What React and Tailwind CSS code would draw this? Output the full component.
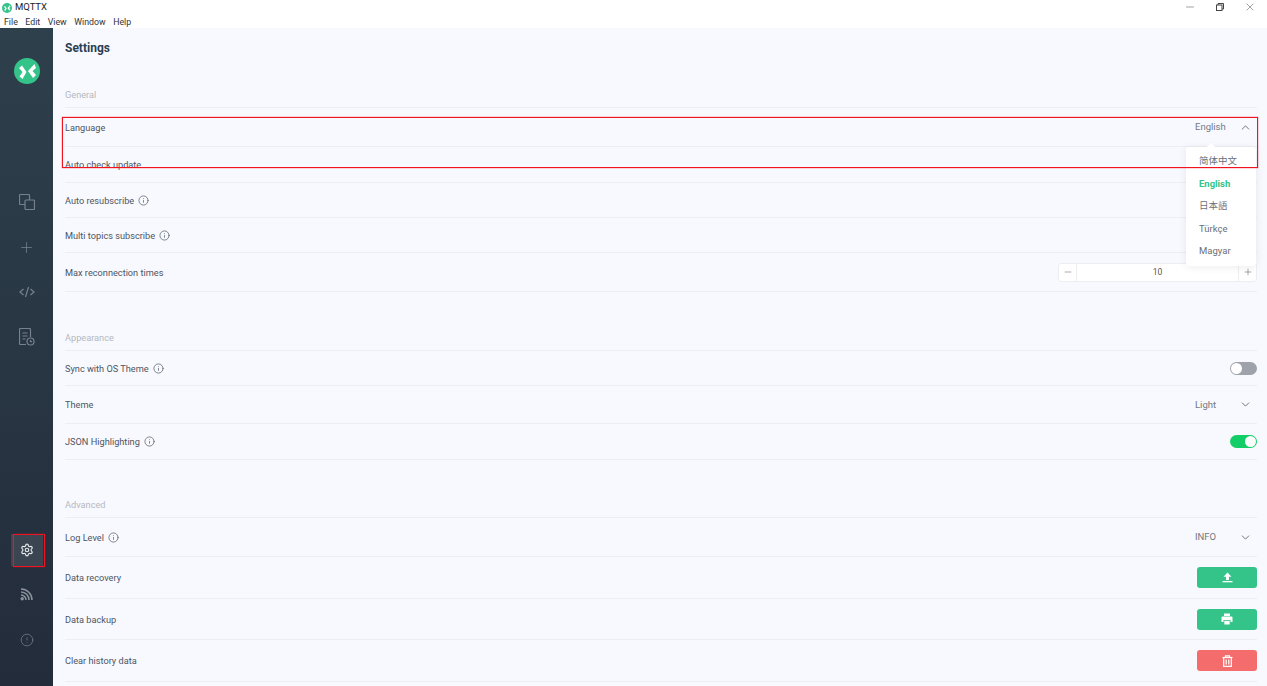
import { Minus, Plus, X, ChevronUp, ChevronDown, Info, Settings, CircleAlert } from 'lucide-react'

function Logo({ size }) {
  return (
    <svg width={size} height={size} viewBox="0 0 26 26">
      <circle cx="13" cy="13" r="13" fill="#34c388" />
      <path d="M5 10 L8 7.5 L12.5 14 L8.5 21 L5.5 18.5 L8.5 14 Z" fill="#fff" />
      <path d="M20.5 6 L22 10 L18.5 13 L22 17 L19 20 L14 13 Z" fill="#fff" />
    </svg>
  )
}

function SideIcon({ children, className = '' }) {
  return <div className={`h-[32px] w-[32px] flex items-center justify-center ${className}`}>{children}</div>
}

function ConnectionsIcon() {
  return (
    <svg width="16" height="16" viewBox="0 0 16 16" fill="none" stroke="#77818e" strokeWidth="1.2">
      <path d="M6 10.5H1.5a1 1 0 0 1-1-1v-8a1 1 0 0 1 1-1h8a1 1 0 0 1 1 1V6" />
      <rect x="6" y="6" width="9.5" height="9.5" rx="1" />
    </svg>
  )
}

function LogIcon() {
  return (
    <svg width="16" height="18" viewBox="0 0 16 18" fill="none" stroke="#77818e" strokeWidth="1.2">
      <path d="M7 16.5H1.5a1 1 0 0 1-1-1v-14a1 1 0 0 1 1-1h9a1 1 0 0 1 1 1V9" />
      <path d="M3.5 5h5M3.5 8h5M3.5 11h3" />
      <circle cx="11.5" cy="13.5" r="3.5" />
      <path d="M11.5 12v1.6h1.4" />
    </svg>
  )
}

function FeedIcon() {
  return (
    <svg width="13" height="13" viewBox="0 0 13 13" fill="none" stroke="#8a939e" strokeWidth="1.5">
      <circle cx="2.2" cy="10.8" r="1.7" fill="#8a939e" stroke="none" />
      <path d="M1 7a5 5 0 0 1 5 5" />
      <path d="M1 4a8 8 0 0 1 8 8" />
      <path d="M1 1a11 11 0 0 1 11 11" />
    </svg>
  )
}

function UploadIcon() {
  return (
    <svg width="11" height="11" viewBox="0 0 11 11" fill="#fff">
      <path d="M5.5 0.5 L9.5 4.8 H7 V8 H4 V4.8 H1.5 Z" />
      <rect x="0.5" y="9" width="10" height="1.3" />
    </svg>
  )
}

function PrintIcon() {
  return (
    <svg width="12" height="12" viewBox="0 0 12 12" fill="#fff">
      <path d="M3 0.5h6v2.5H3z" />
      <path d="M1.5 3.5h9a1 1 0 0 1 1 1V9H9.5V7h-7v2H0.5V4.5a1 1 0 0 1 1-1z" />
      <path d="M3.3 7.8h5.4v3.7H3.3z" />
    </svg>
  )
}

function BinIcon() {
  return (
    <svg width="11" height="12" viewBox="0 0 11 12" fill="none" stroke="#fff" strokeWidth="1.2">
      <path d="M0.5 2.5h10" />
      <path d="M3.5 2.5V0.8h4v1.7" />
      <path d="M1.7 2.5v8.9h7.6V2.5" />
      <path d="M4.2 4.5v5M6.8 4.5v5" />
    </svg>
  )
}

function Label({ text, info }) {
  return (
    <span className="flex items-center gap-[4px] pt-[1px] text-[9.2px] text-[#4d5562]">
      {text}
      {info && <Info size={11} strokeWidth={1.7} className="text-[#5d6570]" />}
    </span>
  )
}

function Row({ height, text, info, children }) {
  return (
    <div className={`flex items-center justify-between border-b border-[#eceef2] ${height}`}>
      <Label text={text} info={info} />
      {children}
    </div>
  )
}

function SelectValue({ value, open }) {
  const Icon = open ? ChevronUp : ChevronDown
  return (
    <div className="flex items-center text-[9.5px] text-[#73787f]">
      <span className="w-[44px] pt-[1px]">{value}</span>
      <Icon size={13} strokeWidth={1.8} className="mr-[5px] text-[#6b7078]" />
    </div>
  )
}

function ActionButton({ color, children }) {
  return <div className={`w-[60px] h-[21px] rounded-[3px] flex items-center justify-center ${color}`}>{children}</div>
}

function SectionLabel({ text, className }) {
  return <div className={`h-[23px] pb-[2px] flex items-center border-b border-[#eceef2] text-[9.2px] text-[#b5b8bf] ${className}`}>{text}</div>
}

const LANGUAGES = [
  { name: '简体中文' },
  { name: 'English', active: true },
  { name: '日本語' },
  { name: 'Türkçe' },
  { name: 'Magyar' },
]

export default function App() {
  return (
    <div className="relative h-[686px] w-[1267px] overflow-hidden bg-white font-['Roboto','Noto_Sans_CJK_SC',sans-serif]">
      {/* Title bar + menu */}
      <div className="h-[28px] flex justify-between">
        <div>
          <div className="h-[15px] flex items-center gap-[3px] pl-[2px] text-[9.5px] text-[#222]">
            <Logo size={10} />
            MQTTX
          </div>
          <div className="h-[13px] pt-[3px] flex items-center gap-[7.5px] pl-[4px] text-[8.8px] text-[#333]">
            <span>File</span>
            <span>Edit</span>
            <span>View</span>
            <span>Window</span>
            <span>Help</span>
          </div>
        </div>
        <div className="flex items-start pt-[1px] text-[#444]">
          <div className="w-[30px] flex justify-center"><Minus size={12} strokeWidth={1} /></div>
          <div className="w-[30px] flex justify-center pt-[2px]">
            <svg width="8" height="8" viewBox="0 0 8 8" fill="none" stroke="#444" strokeWidth="1">
              <rect x="0.5" y="2" width="5.5" height="5.5" />
              <path d="M2 2V0.5h5.5V6H6" />
            </svg>
          </div>
          <div className="w-[30px] flex justify-center mr-[2px]"><X size={12} strokeWidth={1} /></div>
        </div>
      </div>

      <div className="flex h-[658px]">
        {/* Sidebar */}
        <div className="relative w-[53px] flex flex-col items-center bg-gradient-to-b from-[#2e404c] to-[#232c3b]">
          <div className="mt-[30px]"><Logo size={26} /></div>
          <div className="mt-[102px] flex flex-col items-center">
            <SideIcon><ConnectionsIcon /></SideIcon>
            <SideIcon className="mt-[13px]"><Plus size={17} strokeWidth={1.1} className="text-[#77818e]" /></SideIcon>
            <SideIcon className="mt-[13px]">
              <svg width="16" height="12" viewBox="0 0 16 12" fill="none" stroke="#77818e" strokeWidth="1.2">
                <path d="M4.5 3 L1 6 L4.5 9 M11.5 3 L15 6 L11.5 9 M9.5 1 L6.5 11" />
              </svg>
            </SideIcon>
            <SideIcon className="mt-[13px]"><LogIcon /></SideIcon>
          </div>
          <div className="mt-auto mb-[30px] flex flex-col items-center">
            <SideIcon className="bg-white/10"><Settings size={14} strokeWidth={2} className="text-[#e4e7ea]" /></SideIcon>
            <SideIcon className="mt-[12px]"><FeedIcon /></SideIcon>
            <SideIcon className="mt-[14px]"><CircleAlert size={14} strokeWidth={1.2} className="text-[#77818e]" /></SideIcon>
          </div>
        </div>

        {/* Main */}
        <div className="flex-1 bg-[#f8f9fe] pl-[12px] pr-[10px]">
          <h1 className="h-[40px] pt-[10px] text-[12px] leading-[20px] font-bold text-[#2c3e50]">Settings</h1>

          <SectionLabel text="General" className="mt-[17px]" />
          <Row height="h-[39px]" text="Language"><SelectValue value="English" open /></Row>
          <Row height="h-[36px]" text="Auto check update" />
          <Row height="h-[35px]" text="Auto resubscribe" info />
          <Row height="h-[35px]" text="Multi topics subscribe" info />
          <Row height="h-[39px]" text="Max reconnection times">
            <div className="w-[199px] h-[19px] flex items-center rounded-[3px] border border-[#eceef2] bg-white text-[8.5px] text-[#555]">
              <div className="w-[18px] h-full flex items-center justify-center border-r border-[#eceef2]"><Minus size={10} strokeWidth={1.2} /></div>
              <div className="flex-1 text-center">10</div>
              <div className="w-[18px] h-full flex items-center justify-center border-l border-[#eceef2]"><Plus size={10} strokeWidth={1.2} /></div>
            </div>
          </Row>

          <SectionLabel text="Appearance" className="mt-[36px]" />
          <Row height="h-[35px]" text="Sync with OS Theme" info>
            <div className="w-[27px] h-[13px] rounded-full bg-[#9da2ab] flex items-center pl-[1px]">
              <div className="w-[11px] h-[11px] rounded-full bg-white" />
            </div>
          </Row>
          <Row height="h-[38px]" text="Theme"><SelectValue value="Light" /></Row>
          <Row height="h-[36px]" text="JSON Highlighting" info>
            <div className="w-[27px] h-[13px] rounded-full bg-[#13ce66] flex items-center justify-end pr-[1px]">
              <div className="w-[11px] h-[11px] rounded-full bg-white" />
            </div>
          </Row>

          <SectionLabel text="Advanced" className="mt-[35px]" />
          <Row height="h-[39px]" text="Log Level" info><SelectValue value="INFO" /></Row>
          <Row height="h-[42px]" text="Data recovery">
            <ActionButton color="bg-[#34c388]"><UploadIcon /></ActionButton>
          </Row>
          <Row height="h-[41px]" text="Data backup">
            <ActionButton color="bg-[#34c388]"><PrintIcon /></ActionButton>
          </Row>
          <Row height="h-[42px]" text="Clear history data">
            <ActionButton color="bg-[#f56c6c]"><BinIcon /></ActionButton>
          </Row>
        </div>
      </div>

      {/* Language dropdown */}
      <div className="absolute left-[1186px] top-[147px] w-[70px] h-[119px] rounded-[3px] bg-white shadow-[0_1px_8px_rgba(0,0,0,0.08)] pt-[3px]">
        <div className="absolute -top-[3px] left-[22px] w-[6px] h-[6px] rotate-45 bg-white" />
        {LANGUAGES.map(lang => (
          <div
            key={lang.name}
            className={`h-[22.5px] flex items-center pl-[13px] text-[9.5px] ${lang.active ? 'font-bold text-[#34c388]' : 'text-[#6a6f77]'}`}
          >
            {lang.name}
          </div>
        ))}
      </div>

      {/* Annotation boxes */}
      <div className="absolute left-[62px] top-[117px] w-[1196px] h-[51px] border border-[#f0141e] shadow-[0_0_1px_#f0141e]" />
      <div className="absolute left-[13px] top-[534px] w-[32px] h-[33px] border border-[#f0141e] shadow-[0_0_1px_#f0141e]" />
    </div>
  )
}
